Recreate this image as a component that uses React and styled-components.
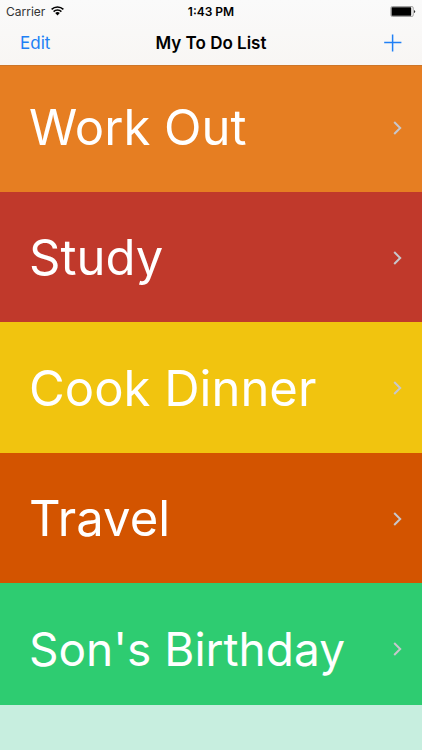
import React from 'react';
import styled, { createGlobalStyle } from 'styled-components';

const GlobalStyle = createGlobalStyle`
  * {
    box-sizing: border-box;
  }
  body {
    margin: 0;
    background: #ffffff;
    font-family: Inter, 'Liberation Sans', sans-serif;
  }
`;

const Header = styled.header`
  position: fixed;
  top: 0;
  left: 0;
  right: 0;
  z-index: 1;
  height: 66px;
  background: linear-gradient(#fafafa, #f8f6f4) padding-box;
  border-bottom: 1px solid rgba(150, 100, 60, 0.3);
`;

const StatusBar = styled.div`
  display: grid;
  grid-template-columns: 1fr auto 1fr;
  align-items: center;
  height: 22px;
  padding: 0 6px;
  font-size: 12px;
  color: #000000;
`;

const Carrier = styled.div`
  display: flex;
  align-items: center;
  gap: 6px;
  color: #333333;
`;

const Time = styled.div`
  font-weight: 600;
`;

const Battery = styled.div`
  display: flex;
  justify-content: flex-end;
`;

const NavBar = styled.div`
  display: grid;
  grid-template-columns: 1fr auto 1fr;
  align-items: center;
  height: 41px;
  padding: 0 20px;
`;

const Title = styled.h1`
  margin: 0;
  font-size: 17px;
  font-weight: 600;
`;

const NavButton = styled.button`
  display: flex;
  justify-self: ${({ $side }) => $side};
  padding: 0;
  border: 0;
  background: none;
  color: #2080f5;
  font-family: inherit;
  font-size: 17px;
  cursor: pointer;
`;

const List = styled.ul`
  margin: 0;
  padding: 62px 0 38px;
  list-style: none;
`;

const Row = styled.a`
  display: flex;
  align-items: center;
  justify-content: space-between;
  height: ${({ $height }) => $height}px;
  padding: 1px 20px 0 29px;
  background: ${({ $color }) => $color};
  color: #ffffff;
  font-size: ${({ $long }) => ($long ? '46px' : '49px')};
  font-weight: 400;
  white-space: nowrap;
  text-decoration: none;
`;

const Toolbar = styled.footer`
  position: fixed;
  bottom: 0;
  left: 0;
  right: 0;
  height: 45px;
  background: #c7eedf;
`;

const todos = [
  { name: "Work Out", color: '#e67e22', height: 130 },
  { name: "Study", color: '#c0392b', height: 130 },
  { name: "Cook Dinner", color: '#f1c40f', height: 131 },
  { name: "Travel", color: '#d35400', height: 130 },
  { name: "Son's Birthday", color: '#2ecc71', height: 130, long: true },
];

function WifiIcon() {
  return (
    <svg width="13" height="10" viewBox="0 0 13 10" fill="none" stroke="#000000" strokeWidth="1.5">
      <path d="M0.6 3.4a8.4 8.4 0 0 1 11.8 0" />
      <path d="M2.6 5.6a5.6 5.6 0 0 1 7.8 0" />
      <path d="M6.5 9.4L4.2 7.1a3.3 3.3 0 0 1 4.6 0z" fill="#000000" stroke="none" />
    </svg>
  );
}

function BatteryIcon() {
  return (
    <svg width="26" height="11" viewBox="0 0 26 11">
      <rect x="0.9" y="0.5" width="22.3" height="10" rx="1.4" fill="#ffffff" stroke="#8a8a8a" strokeWidth="0.8" />
      <rect x="1.6" y="1.2" width="19.6" height="8.6" rx="0.6" fill="#000000" />
      <path d="M24.2 3.9a1.8 1.8 0 0 1 0 3.2z" fill="#000000" />
    </svg>
  );
}

function PlusIcon() {
  return (
    <svg width="18" height="18" viewBox="0 0 18 18" stroke="currentColor" strokeWidth="1.5">
      <path d="M8.6 0.4v17.2M0.2 8.6h17.2" />
    </svg>
  );
}

function Chevron() {
  return (
    <svg width="9" height="14" viewBox="0 0 9 14" fill="none" stroke="#c7c7cc" strokeWidth="2">
      <path d="M1.2 1L7.2 7l-6 6" />
    </svg>
  );
}

function App() {
  return (
    <>
      <GlobalStyle />
      <Header>
        <StatusBar>
          <Carrier>
            Carrier
            <WifiIcon />
          </Carrier>
          <Time>1:43 PM</Time>
          <Battery>
            <BatteryIcon />
          </Battery>
        </StatusBar>
        <NavBar>
          <NavButton type="button" $side="start">Edit</NavButton>
          <Title>My To Do List</Title>
          <NavButton type="button" $side="end" aria-label="Add">
            <PlusIcon />
          </NavButton>
        </NavBar>
      </Header>
      <List>
        {todos.map((todo) => (
          <li key={todo.name}>
            <Row href="#" $color={todo.color} $height={todo.height} $long={todo.long}>
              {todo.name}
              <Chevron />
            </Row>
          </li>
        ))}
      </List>
      <Toolbar />
    </>
  );
}

export default App;
